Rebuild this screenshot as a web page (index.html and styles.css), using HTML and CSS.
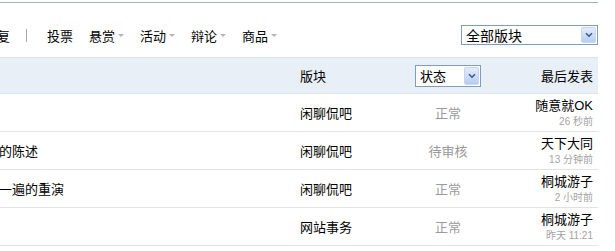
FILE: index.html
```html
<!DOCTYPE html>
<html lang="zh-CN">
<head>
    <meta charset="UTF-8">
    <title>主题列表</title>
    <link rel="stylesheet" href="styles.css">
</head>
<body>
    <div class="page">
        <!-- Filter bar -->
        <div class="toolbar">
            <ul class="filters">
                <li>精华</li>
                <li>最新回复</li>
            </ul>
            <span class="sep"></span>
            <ul class="types">
                <li>投票</li>
                <li>悬赏<i class="caret"></i></li>
                <li>活动<i class="caret"></i></li>
                <li>辩论<i class="caret"></i></li>
                <li>商品<i class="caret"></i></li>
            </ul>
            <div class="select forum-select">
                <span class="select-text">全部版块</span>
                <span class="select-btn"><svg width="8" height="6" viewBox="0 0 8 6"><path d="M1 1.2 L4 4.2 L7 1.2" fill="none" stroke="#3d5a8c" stroke-width="1.6"/></svg></span>
            </div>
        </div>

        <!-- Table head -->
        <div class="thread-head">
            <div class="col-title"></div>
            <div class="col-forum">版块</div>
            <div class="col-status">
                <div class="select status-select">
                    <span class="select-text">状态</span>
                    <span class="select-btn"><svg width="8" height="6" viewBox="0 0 8 6"><path d="M1 1.2 L4 4.2 L7 1.2" fill="none" stroke="#3d5a8c" stroke-width="1.6"/></svg></span>
                </div>
            </div>
            <div class="col-last">最后发表</div>
        </div>

        <!-- Threads -->
        <div class="thread-row">
            <div class="col-title">新人报到帖</div>
            <div class="col-forum">闲聊侃吧</div>
            <div class="col-status">正常</div>
            <div class="col-last"><span class="author">随意就OK</span><span class="time">26 秒前</span></div>
        </div>
        <div class="thread-row">
            <div class="col-title">对论坛近期整改的陈述</div>
            <div class="col-forum">闲聊侃吧</div>
            <div class="col-status">待审核</div>
            <div class="col-last"><span class="author">天下大同</span><span class="time">13 分钟前</span></div>
        </div>
        <div class="thread-row">
            <div class="col-title">历史总不过是上一遍的重演</div>
            <div class="col-forum">闲聊侃吧</div>
            <div class="col-status">正常</div>
            <div class="col-last"><span class="author">桐城游子</span><span class="time">2 小时前</span></div>
        </div>
        <div class="thread-row">
            <div class="col-title">版规公告</div>
            <div class="col-forum">网站事务</div>
            <div class="col-status">正常</div>
            <div class="col-last"><span class="author">桐城游子</span><span class="time">昨天 11:21</span></div>
        </div>
        <div class="thread-row">
            <div class="col-title">求助</div>
            <div class="col-forum">闲聊侃吧</div>
            <div class="col-status">正常</div>
            <div class="col-last"><span class="author">最爱桐城小吃</span><span class="time">昨天 09:02</span></div>
        </div>
    </div>
</body>
</html>
```

FILE: styles.css
```css
html, body {
    overflow: hidden;
}
body {
    margin: 0;
    padding-top: 2px;
    font-family: "Liberation Sans", "Noto Sans CJK SC", sans-serif;
    font-size: 13px;
    color: #000;
    background: #fff;
}
.page {
    width: 700px;
    margin-left: -102px;
    border-top: 1px solid #a3aebb;
}

/* toolbar */
.toolbar {
    display: flex;
    align-items: center;
    height: 44px;
    padding: 10px 0 0 18px;
}
.toolbar ul {
    display: flex;
    gap: 16px;
    margin: 0;
    padding: 0;
    list-style: none;
}
.toolbar li {
    display: flex;
    align-items: center;
    white-space: nowrap;
}
.sep {
    width: 1px;
    height: 13px;
    background: #a8a8a8;
    margin: 0 20px 0 16px;
}
.caret {
    width: 0;
    height: 0;
    margin-left: 3px;
    border-left: 3px solid transparent;
    border-right: 3px solid transparent;
    border-top: 3px solid #b4b4b4;
}

/* fake select boxes */
.select {
    display: flex;
    align-items: center;
    box-sizing: border-box;
    height: 20px;
    border: 1px solid #7f9db9;
    background: #fff;
    color: #000;
    text-align: left;
}
.select-text {
    flex: 1;
    padding-left: 4px;
    white-space: nowrap;
}
.select-btn {
    display: flex;
    align-items: center;
    justify-content: center;
    box-sizing: border-box;
    width: 15px;
    height: 16px;
    margin-right: 1px;
    border: 1px solid #c6d6f2;
    border-radius: 2px;
    background: linear-gradient(#e4ecfc, #b8cdf2);
}
.forum-select {
    width: 137px;
    margin-left: auto;
    font-size: 14px;
}
.status-select {
    width: 66px;
    height: 22px;
    margin: 0 auto;
}
.status-select .select-btn {
    height: 18px;
}

/* thread table */
.thread-head, .thread-row {
    display: grid;
    grid-template-columns: 397px 103px 100px 100px;
    align-items: center;
}
.thread-head {
    height: 35px;
    border-top: 1px solid #d8e1ec;
    border-bottom: 1px solid #dde5ef;
    background: #e9eff7;
}
.thread-row {
    height: 37px;
    border-bottom: 1px solid #e2e2e2;
}
.col-title {
    padding-left: 10px;
    white-space: nowrap;
    overflow: hidden;
}
.col-forum {
    padding-left: 5px;
}
.col-status {
    text-align: center;
    color: #9a9a9a;
}
.col-last {
    display: flex;
    flex-direction: column;
    align-items: flex-end;
    padding-right: 5px;
    text-align: right;
}
.author {
    line-height: 16px;
}
.time {
    margin-top: 1px;
    font-size: 10px;
    line-height: 13px;
    color: #a3a3a3;
}
```
